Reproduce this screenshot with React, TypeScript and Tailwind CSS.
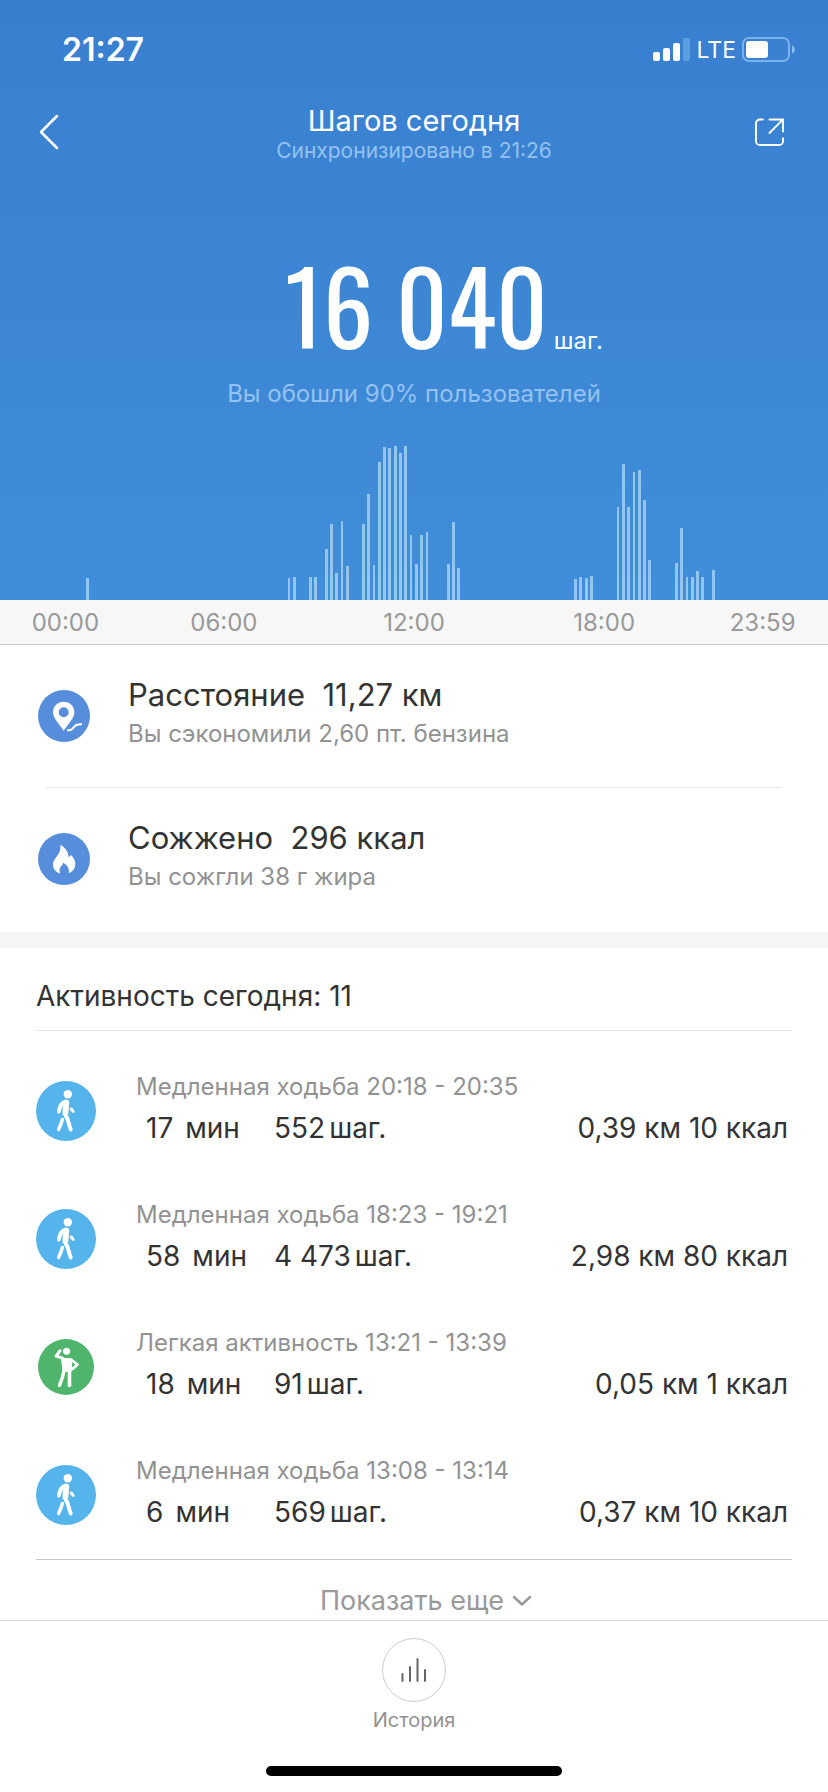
import type { ReactNode } from "react";

interface Activity {
  kind: "walk" | "light";
  title: string;
  minutes: string;
  steps: string;
  result: string;
}

const activities: Activity[] = [
  {
    kind: "walk",
    title: "Медленная ходьба 20:18 - 20:35",
    minutes: "17",
    steps: "552",
    result: "0,39 км 10 ккал",
  },
  {
    kind: "walk",
    title: "Медленная ходьба 18:23 - 19:21",
    minutes: "58",
    steps: "4 473",
    result: "2,98 км 80 ккал",
  },
  {
    kind: "light",
    title: "Легкая активность 13:21 - 13:39",
    minutes: "18",
    steps: "91",
    result: "0,05 км 1 ккал",
  },
  {
    kind: "walk",
    title: "Медленная ходьба 13:08 - 13:14",
    minutes: "6",
    steps: "569",
    result: "0,37 км 10 ккал",
  },
];

const hours = ["00:00", "06:00", "12:00", "18:00", "23:59"];

// x, height, width
const bars = [
  [86, 22, 3], [288, 22, 2], [293, 23, 3], [309, 23, 3], [314, 23, 3],
  [325, 51, 3], [330, 76, 3], [335, 27, 3], [341, 79, 2], [346, 34, 3],
  [362, 76, 3], [367, 106, 3], [373, 35, 2], [378, 138, 3], [383, 153, 3],
  [388, 152, 3], [394, 154, 3], [399, 147, 3], [404, 154, 3], [410, 65, 2],
  [415, 36, 3], [420, 65, 3], [426, 68, 2], [447, 36, 3], [452, 78, 3],
  [457, 32, 3], [574, 21, 3], [579, 23, 3], [585, 22, 3], [590, 24, 3],
  [617, 93, 2], [622, 136, 3], [627, 93, 3], [633, 128, 2], [638, 130, 3],
  [643, 100, 3], [648, 40, 3], [675, 37, 3], [680, 72, 3], [686, 23, 2],
  [691, 23, 3], [696, 29, 3], [701, 23, 3], [712, 30, 3],
];

function StatusBar() {
  return (
    <div className="flex h-[100px] items-center justify-between pl-[62px] pr-8">
      <span className="text-[32px] font-semibold leading-10">21:27</span>
      <div className="flex items-center gap-[6px]">
        <svg width="38" height="24" viewBox="0 0 38 24" fill="#fff" aria-hidden="true">
          <rect x="0" y="14" width="7" height="9" rx="2" />
          <rect x="10" y="10" width="7" height="13" rx="2" />
          <rect x="20" y="5" width="7" height="18" rx="2" />
          <rect x="30" y="0" width="7" height="23" rx="2" fill="#5a9fe0" />
        </svg>
        <span className="text-[23px] leading-8">LTE</span>
        <svg width="54" height="26" viewBox="0 0 54 26" aria-hidden="true">
          <rect x="1" y="1" width="46" height="23" rx="6" fill="none" stroke="#78b2ea" strokeWidth="2" />
          <rect x="4" y="4" width="22" height="17" rx="3" fill="#fff" />
          <path d="M50 8.500q3 1.500 3 4t-3 4z" fill="#8fc0ef" />
        </svg>
      </div>
    </div>
  );
}

function StepChart() {
  return (
    <svg viewBox="0 0 828 154" className="block w-full" role="img" aria-label="Шаги по времени">
      {bars.map(([x, h, w]) => (
        <rect
          key={x}
          x={x}
          y={154 - h}
          width={w}
          height={h}
          fill="#94c5ef"
          shapeRendering="crispEdges"
        />
      ))}
    </svg>
  );
}

function PinIcon() {
  return (
    <svg width="52" height="52" viewBox="0 0 52 52" aria-hidden="true">
      <circle cx="26" cy="26" r="26" fill="#568edb" />
      <path
        fillRule="evenodd"
        fill="#fff"
        d="M25.700 11.700c-6 0-10.700 4.600-10.700 10.400 0 6 5.200 10.700 10.700 18.600 5.500-7.900 10.700-12.600 10.700-18.600 0-5.800-4.700-10.400-10.700-10.400zm0 5.600a5 5 0 1 1 0 10 5 5 0 0 1 0-10z"
      />
      <path d="M29 40.300h2c3.500 0 3.500-1.800 5.500-4s4-2 7.500-2" fill="none" stroke="#fff" strokeWidth="2" />
    </svg>
  );
}

function FlameIcon() {
  return (
    <svg width="52" height="52" viewBox="0 0 52 52" aria-hidden="true">
      <circle cx="26" cy="26" r="26" fill="#568edb" />
      <path
        fill="#fff"
        d="M22.300 12c4.200 1.800 8 6.300 8.300 12 1.300-.4 1.900-1.200 2.200-2.300 3 3 4.700 6.400 4.500 9.600-.3 4.300-2.400 7.500-6.500 8.900.8-4.400-1.200-7.700-5.700-10.700-.2 1.700-.9 2.700-2.200 4-1.600 1.700-1.900 4-.6 6.900-4.600-1-7.400-4.600-7.300-9 .1-6.400 8.800-9.900 7.300-19.400z"
      />
    </svg>
  );
}

function WalkIcon() {
  return (
    <svg width="60" height="60" viewBox="0 0 60 60" aria-hidden="true">
      <circle cx="30" cy="30" r="30" fill="#56b4ec" />
      <circle cx="31.800" cy="13.300" r="4.200" fill="#fff" />
      <path
        fill="#fff"
        d="M25.500 20.500c1.500-1.200 3-1.800 5-1.800 1.800 0 2.800 1.200 2.700 3l-.8 11-5.900 1.300.2-9.500-2.300 6.800c-.7 2-3.800 1.500-3.400-.8.600-3.600 1.600-7.600 4.500-10z"
      />
      <g fill="none" stroke="#fff" strokeLinecap="round" strokeLinejoin="round">
        <path d="M28.800 32.500l2.700 5.500 3.200 10.500" strokeWidth="4" />
        <path d="M26.300 38.500l-1 3.500-2.700 6.500" strokeWidth="3.400" />
        <path d="M35.200 28l2 2.400" strokeWidth="3" />
      </g>
    </svg>
  );
}

function LightActivityIcon() {
  return (
    <svg width="56" height="56" viewBox="0 0 56 56" aria-hidden="true">
      <circle cx="28" cy="28" r="28" fill="#50b56c" />
      <circle cx="28.600" cy="12.200" r="3.500" fill="#fff" />
      <path d="M23 18.500l11.500 1-1 13.500h-9z" fill="#fff" />
      <g fill="none" stroke="#fff" strokeLinecap="round" strokeLinejoin="round">
        <path d="M22 11.800l-4 5.200 6.500 2.200" strokeWidth="3" />
        <path d="M33.500 21l6 4.500-5 4.500" strokeWidth="2.800" />
        <path d="M26 32l-1.500 6-3 8.500" strokeWidth="3.400" />
        <path d="M31.500 32v14.500" strokeWidth="3.600" />
      </g>
    </svg>
  );
}

function Stat({ icon, title, note }: { icon: ReactNode; title: string; note: string }) {
  return (
    <div className="flex h-[142px] items-center gap-[38px] pl-[38px]">
      {icon}
      <div className="pb-1">
        <p className="whitespace-pre text-[31px] leading-10 text-[#333]">{title}</p>
        <p className="text-[24px] leading-[38px] text-[#929292]">{note}</p>
      </div>
    </div>
  );
}

function ActivityRow({ activity }: { activity: Activity }) {
  return (
    <li className="flex h-32 items-center pr-1">
      <div className="flex w-[60px] justify-center">
        {activity.kind === "walk" ? <WalkIcon /> : <LightActivityIcon />}
      </div>
      <div className="ml-10 flex-1 pb-[6px]">
        <p className="text-[24px] leading-10 text-[#929292]">{activity.title}</p>
        <div className="flex text-[28px] leading-[42px] text-[#333]">
          <span className="flex w-[138px] gap-3 pl-[10px]">
            <span>{activity.minutes}</span>
            <span>мин</span>
          </span>
          <span className="flex gap-1">
            <span>{activity.steps}</span>
            <span>шаг.</span>
          </span>
          <span className="ml-auto">{activity.result}</span>
        </div>
      </div>
    </li>
  );
}

export default function App() {
  return (
    <div className="flex min-h-screen flex-col bg-white font-['Inter','Noto_Sans',sans-serif]">
      <header className="bg-linear-to-b from-[#397fd0] to-[#408ed9] text-white">
        <StatusBar />
        <div className="flex h-16 items-center justify-between px-9">
          <button type="button" aria-label="Назад" className="flex w-12 items-center">
            <svg width="26" height="36" viewBox="0 0 26 36" fill="none" aria-hidden="true">
              <path d="M21 2L5 18l16 16" stroke="#fff" strokeWidth="2.500" strokeLinecap="round" strokeLinejoin="round" />
            </svg>
          </button>
          <div className="pt-[6px] text-center">
            <h1 className="text-[29px] leading-8">Шагов сегодня</h1>
            <p className="text-[21px] leading-7 text-[#94c2f0]">Синхронизировано в 21:26</p>
          </div>
          <button type="button" aria-label="Поделиться" className="flex w-12 items-center justify-end pr-2">
            <svg width="29" height="29" viewBox="0 0 30 30" fill="none" stroke="#fff" strokeWidth="2" strokeLinecap="round" strokeLinejoin="round" aria-hidden="true">
              <path d="M8 1.500H5a4 4 0 0 0-4 4V24a4 4 0 0 0 4 4h20a4 4 0 0 0 4-4v-3" />
              <path d="M15 1.500h14V14M28.500 2L15 15.500" />
            </svg>
          </button>
        </div>
        <div className="flex items-baseline justify-center gap-[6px] pl-[60px] pt-20">
          <span className="font-['Oswald','Roboto_Condensed',sans-serif] text-[100px] font-[450] leading-[120px]">
            16 040
          </span>
          <span className="text-[24px] leading-8">шаг.</span>
        </div>
        <p className="pt-3 text-center text-[24px] leading-9 text-[#94c2f0]">
          Вы обошли 90% пользователей
        </p>
        <div className="pt-[34px]">
          <StepChart />
        </div>
      </header>

      <div className="grid h-[45px] grid-cols-[2fr_3fr_3fr_3fr_2fr] items-center border-b border-[#c8c8c8] bg-[#f7f7f7] px-[2px] pt-[2px] text-center text-[24px] text-[#999]">
        {hours.map((hour) => (
          <span key={hour}>{hour}</span>
        ))}
      </div>

      <section className="pb-[2px]">
        <Stat icon={<PinIcon />} title="Расстояние  11,27 км" note="Вы сэкономили 2,60 пт. бензина" />
        <hr className="mx-[46px] border-[#e8e8e8]" />
        <Stat icon={<FlameIcon />} title="Сожжено  296 ккал" note="Вы сожгли 38 г жира" />
      </section>

      <div className="h-4 bg-[#f5f7f7]" />

      <section className="px-9">
        <h2 className="border-b border-[#e8e8e8] pb-[14px] pt-7 text-[28px] leading-10 text-[#333]">
          Активность сегодня: 11
        </h2>
        <ul className="border-b border-[#c8c8c8] pt-4">
          {activities.map((activity) => (
            <ActivityRow key={activity.title} activity={activity} />
          ))}
        </ul>
        <button type="button" className="flex h-[60px] w-full items-center justify-center gap-2 pl-6 pt-[22px] text-[27px] text-[#999]">
          Показать еще
          <svg width="20" height="12" viewBox="0 0 20 12" fill="none" aria-hidden="true">
            <path d="M2 2l8 7.500L18 2" stroke="#999" strokeWidth="2.500" strokeLinecap="round" strokeLinejoin="round" />
          </svg>
        </button>
      </section>

      <nav className="flex flex-1 flex-col items-center border-t border-[#d4d4d4] bg-white pb-4 pt-[17px]">
        <button type="button" className="flex flex-col items-center gap-1 text-[20px] leading-7 text-[#929292]">
          <span className="flex size-16 items-center justify-center rounded-full border border-[#ccc]">
            <svg width="26" height="26" viewBox="0 0 26 26" stroke="#666" strokeWidth="2" strokeLinecap="round" aria-hidden="true">
              <path d="M1.500 17v7M9 10v14M16.500 2v22M24 13v11" />
            </svg>
          </span>
          История
        </button>
        <div className="mt-auto h-[10px] w-[296px] rounded-full bg-black" />
      </nav>
    </div>
  );
}
